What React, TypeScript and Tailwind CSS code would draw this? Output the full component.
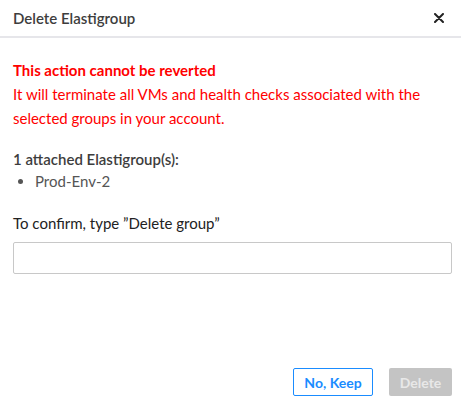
export default function App() {
  return (
    <div className="w-[461px] h-[408px] bg-white flex flex-col font-['Lato','Noto_Sans',sans-serif] text-[#333]">
      {/* Header */}
      <div className="h-[38px] flex items-center justify-between pl-[13px] pr-[14px] border-b-2 border-[#e6e6ea]">
        <h2 className="text-[15px] font-semibold text-[#3d3d3d]">Delete Elastigroup</h2>
        <button className="w-4 h-4 flex items-center justify-center text-[#222]">
          <svg width="10" height="10" viewBox="0 0 10 10">
            <path d="M1 1L9 9M9 1L1 9" stroke="currentColor" strokeWidth="2" strokeLinecap="round" />
          </svg>
        </button>
      </div>

      {/* Body */}
      <div className="flex-1 flex flex-col pl-[13px] pr-[9px] pt-[20px]">
        <div className="text-[15px] leading-[24px] text-[#ff0000]">
          <p className="font-bold">This action cannot be reverted</p>
          <p>It will terminate all VMs and health checks associated with the selected groups in your account.</p>
        </div>

        <div className="mt-[18px] text-[15px] leading-[22px]">
          <p className="font-semibold text-[#3d3d3d]">1 attached Elastigroup(s):</p>
          <ul className="list-disc pl-[22px] text-[#555] marker:text-[#555]">
            <li>Prod-Env-2</li>
          </ul>
        </div>

        <label className="mt-[20px] text-[15px] leading-[22px] text-[#222]">To confirm, type ”Delete group”</label>
        <input
          type="text"
          className="mt-[8px] h-[32px] w-full border border-[#c8c8c8] rounded-[2px] px-2 outline-none"
        />
      </div>

      {/* Footer */}
      <div className="flex justify-end gap-[16px] px-[9px] pb-[12px]">
        <button className="h-[28px] w-[80px] border border-[#1a8cff] rounded-[2px] text-[#1a8cff] text-[14px] font-bold">
          No, Keep
        </button>
        <button className="h-[28px] w-[63px] bg-[#c4c4c4] rounded-[2px] text-[#e8e8e8] text-[14px] font-bold">
          Delete
        </button>
      </div>
    </div>
  );
}
